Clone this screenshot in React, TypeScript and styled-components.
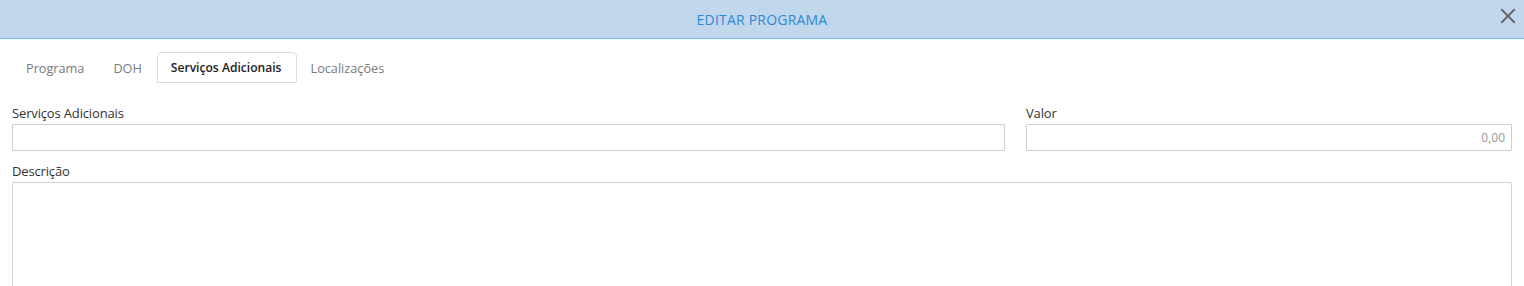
import React from "react";
import styled, { createGlobalStyle } from "styled-components";

const Global = createGlobalStyle`
  html, body { margin: 0; padding: 0; background: #fff; }
  body { font-family: "Open Sans", "Noto Sans", sans-serif; font-size: 12px; color: #333; }
  * { box-sizing: border-box; }
`;

const Modal = styled.div`
  width: 1524px;
  height: 286px;
  overflow: hidden;
  background: #fff;
`;

const Header = styled.div`
  height: 39px;
  background: #c1d7ec;
  border-bottom: 1px solid #6fbaf3;
  display: flex;
  align-items: center;
  justify-content: center;
  position: relative;
`;

const Title = styled.div`
  color: #2c89d6;
  font-size: 14px;
  letter-spacing: 0.2px;
`;

const Close = styled.button`
  position: absolute;
  right: 8px;
  top: 8px;
  width: 16px;
  height: 16px;
  padding: 0;
  border: 0;
  background: transparent;
  cursor: pointer;
  display: flex;
`;

const Body = styled.div`
  padding: 13px 12px 0 12px;
`;

const Tabs = styled.div`
  display: flex;
  align-items: flex-end;
  height: 31px;
  margin-left: 0;
`;

const Tab = styled.div<{ $active?: boolean }>`
  height: 31px;
  padding: 0 14px 0 13px;
  display: flex;
  align-items: center;
  font-size: ${(p) => (p.$active ? "12.1px" : "12.7px")};
  color: ${(p) => (p.$active ? "#222" : "#7a7a7a")};
  font-weight: ${(p) => (p.$active ? 600 : 400)};
  border: 1px solid ${(p) => (p.$active ? "#dcdcdc" : "transparent")};
  border-radius: 4px 4px 0 0;
  background: #fff;
`;

const Form = styled.div`
  margin-top: 22px;
  display: grid;
  grid-template-columns: 993px 1fr;
  column-gap: 21px;
  row-gap: 12px;
`;

const Field = styled.div<{ $full?: boolean }>`
  display: flex;
  flex-direction: column;
  grid-column: ${(p) => (p.$full ? "1 / -1" : "auto")};
`;

const Label = styled.label`
  font-size: 13px;
  letter-spacing: -0.15px;
  color: #333;
  line-height: 16px;
  margin-bottom: 3px;
`;

const Input = styled.input<{ $right?: boolean }>`
  height: 27px;
  border: 1px solid #cfcfcf;
  border-radius: 1px;
  padding: 0 6px;
  font-family: inherit;
  font-size: 12px;
  color: #999;
  text-align: ${(p) => (p.$right ? "right" : "left")};
  outline: none;
  &::placeholder { color: #999; }
`;

const TextArea = styled.textarea`
  height: 140px;
  border: 1px solid #cfd3d6;
  border-radius: 1px;
  resize: none;
  font-family: inherit;
  outline: none;
`;

export default function App() {
  return (
    <>
      <Global />
      <Modal>
        <Header>
          <Title>EDITAR PROGRAMA</Title>
          <Close aria-label="Fechar">
            <svg width="16" height="16" viewBox="0 0 16 16">
              <path d="M2 2 L14 14 M14 2 L2 14" stroke="#666" strokeWidth="2" strokeLinecap="square" />
            </svg>
          </Close>
        </Header>
        <Body>
          <Tabs>
            <Tab>Programa</Tab>
            <Tab>DOH</Tab>
            <Tab $active>Serviços Adicionais</Tab>
            <Tab>Localizações</Tab>
          </Tabs>
          <Form>
            <Field>
              <Label>Serviços Adicionais</Label>
              <Input />
            </Field>
            <Field>
              <Label>Valor</Label>
              <Input $right defaultValue="0,00" />
            </Field>
            <Field $full>
              <Label>Descrição</Label>
              <TextArea />
            </Field>
          </Form>
        </Body>
      </Modal>
    </>
  );
}
